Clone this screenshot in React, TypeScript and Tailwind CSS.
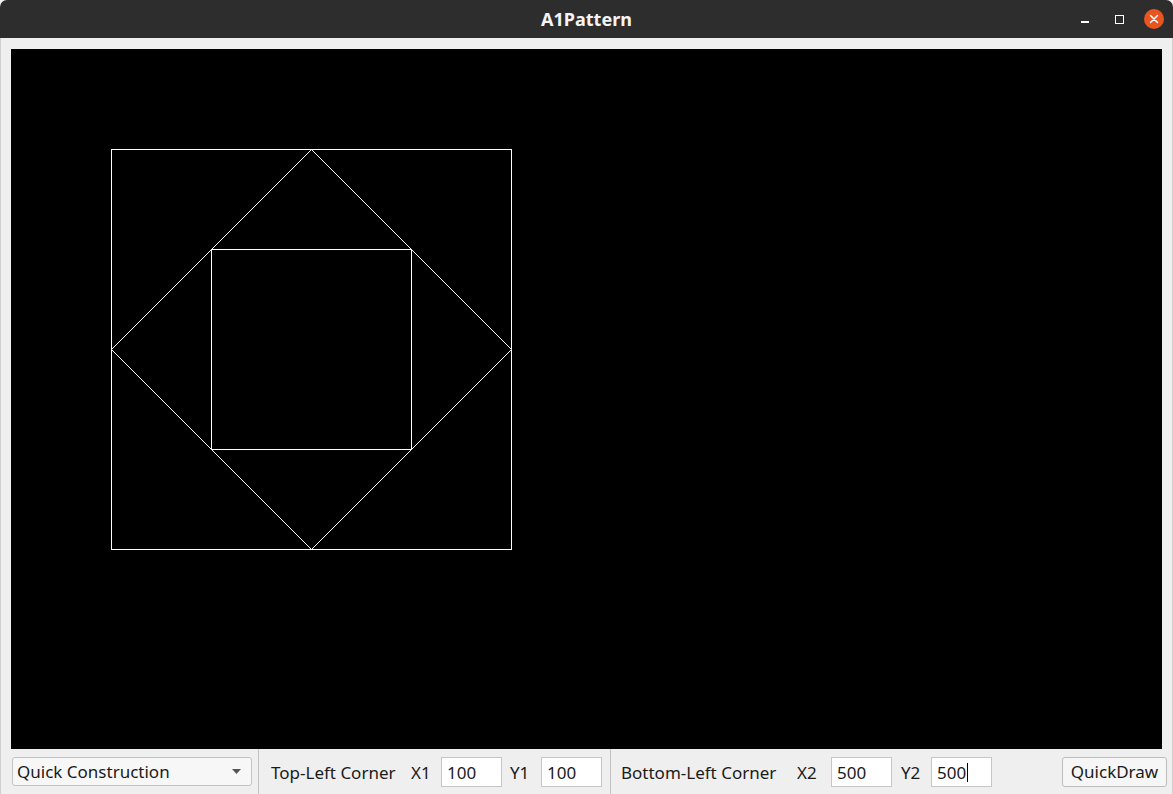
import React from "react";

const font = { fontFamily: '"Noto Sans", "DejaVu Sans", sans-serif' };

function Field({ value, cursor }: { value: string; cursor?: boolean }) {
  return (
    <div className="flex h-[30px] w-[61px] items-center border border-[#c6c6c6] bg-white pl-[5px] pt-[2px] text-[17px] text-[#1a1a1a]">
      <span>{value}</span>
      {cursor && <span className="ml-[1px] inline-block h-[19px] w-[1px] bg-black" />}
    </div>
  );
}

export default function App() {
  return (
    <div className="h-[794px] w-[1173px] overflow-hidden bg-[#f3f3f3]" style={font}>
      <div className="relative flex h-[38px] items-center justify-center rounded-t-[7px] bg-[#2d2d2d]">
        <span className="text-[18px] font-bold text-[#f4f4f4]">A1Pattern</span>
        <div className="absolute right-[9px] top-0 flex h-[38px] items-center">
          <div className="mr-[26px] mt-[6px] h-[2px] w-[8px] bg-white" />
          <div className="mr-[20px] h-[9px] w-[9px] border-[1.5px] border-white" />
          <div className="flex h-[20px] w-[20px] items-center justify-center rounded-full bg-[#e95420]">
            <svg width="10" height="10" viewBox="0 0 10 10">
              <path d="M1.5 1.5 L8.5 8.5 M8.5 1.5 L1.5 8.5" stroke="white" strokeWidth="1.5" strokeLinecap="round" />
            </svg>
          </div>
        </div>
      </div>
      <div className="flex h-[756px] flex-col border-x border-[#cfcfcf] bg-[#efefef] pl-[10px] pr-[10px] pt-[11px]">
        <div className="h-[700px] w-[1151px] bg-black">
          <svg width="1151" height="700" viewBox="0 0 1151 700">
            <g fill="none" stroke="white" strokeWidth="1">
              <rect x="100.5" y="100.5" width="400" height="400" shapeRendering="crispEdges" />
              <rect x="200.5" y="200.5" width="200" height="200" shapeRendering="crispEdges" />
              <polygon points="300.5,100.5 500.5,300.5 300.5,500.5 100.5,300.5" />
            </g>
          </svg>
        </div>
        <div className="flex h-[45px] items-stretch text-[17px] text-[#1a1a1a]">
          <div className="flex items-center pl-[1px]">
            <div className="flex h-[29px] w-[240px] items-center justify-between rounded-[3px] border border-[#c3c3c3] bg-[#f7f7f7] pl-[4px] pr-[10px]">
              <span className="pt-[1px]">Quick Construction</span>
              <svg width="9" height="5" viewBox="0 0 9 5">
                <path d="M0 0 L9 0 L4.5 5 Z" fill="#555" />
              </svg>
            </div>
          </div>
          <div className="ml-[6px] w-[1px] bg-[#c2c2c2]" />
          <div className="flex items-center pl-[12px]">
            <span className="w-[140px] pt-[2px]">Top-Left Corner</span>
            <span className="w-[30px] pt-[2px]">X1</span>
            <Field value="100" />
            <span className="ml-[8px] w-[31px] pt-[2px]">Y1</span>
            <Field value="100" />
          </div>
          <div className="ml-[8px] w-[1px] bg-[#c2c2c2]" />
          <div className="flex items-center pl-[10px]">
            <span className="w-[176px] pt-[2px]">Bottom-Left Corner</span>
            <span className="w-[34px] pt-[2px]">X2</span>
            <Field value="500" />
            <span className="ml-[9px] w-[30px] pt-[2px]">Y2</span>
            <Field value="500" cursor />
          </div>
          <div className="flex flex-1 items-center justify-end">
            <div className="mr-[-5px] flex h-[30px] w-[105px] items-center justify-center rounded-[3px] border border-[#bdbdbd] bg-[#f6f6f6] pt-[1px]">
              QuickDraw
            </div>
          </div>
        </div>
      </div>
    </div>
  );
}
